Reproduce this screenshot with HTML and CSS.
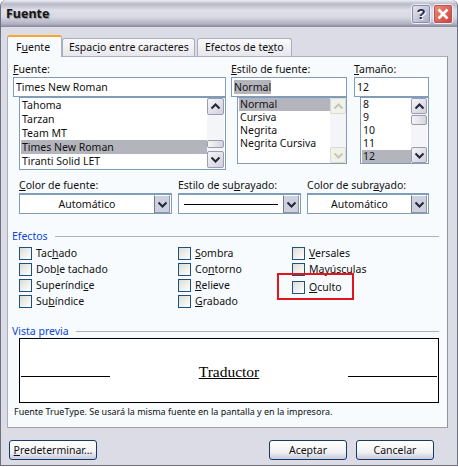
FILE: index.html
```html
<!DOCTYPE html>
<html lang="es">
<head>
<meta charset="utf-8">
<title>Fuente</title>
<link rel="stylesheet" href="styles.css">
</head>
<body>
<div class="window">
  <header class="titlebar">
    <span class="title">Fuente</span>
    <div class="caption-buttons">
      <button class="cap help">?</button>
      <button class="cap close"><svg width="14" height="14" viewBox="0 0 14 14"><path d="M2.5 2.5 L11.5 11.5 M11.5 2.5 L2.5 11.5" stroke="#fff" stroke-width="2.6" fill="none"/></svg></button>
    </div>
  </header>
  <div class="client">
    <div class="tabs">
      <div class="tab active">F<u>u</u>ente</div>
      <div class="tab second">Espac<u>i</u>o entre caracteres</div>
      <div class="tab third">Efectos de te<u>x</u>to</div>
    </div>
    <main class="panel">
      <div class="font-grid">
        <div class="picker">
          <label class="lbl"><u>F</u>uente:</label>
          <div class="input">Times New Roman</div>
          <div class="list tall pad">
            <div class="items">
              <div class="item">Tahoma</div>
              <div class="item">Tarzan</div>
              <div class="item">Team MT</div>
              <div class="item sel">Times New Roman</div>
              <div class="item">Tiranti Solid LET</div>
            </div>
            <div class="scroll">
              <span class="sbtn"><svg width="11" height="7" viewBox="0 0 11 7"><path d="M1.5 5.5 L5.5 1.5 L9.5 5.5" class="chev"/></svg></span>
              <span class="track track-font"><span class="thumb"></span></span>
              <span class="sbtn"><svg width="11" height="7" viewBox="0 0 11 7"><path d="M1.5 1.5 L5.5 5.5 L9.5 1.5" class="chev"/></svg></span>
            </div>
          </div>
        </div>
        <div class="picker">
          <label class="lbl"><u>E</u>stilo de fuente:</label>
          <div class="input"><span class="hl">Normal</span></div>
          <div class="list">
            <div class="items">
              <div class="item tight sel">Normal</div>
              <div class="item tight">Cursiva</div>
              <div class="item tight">Negrita</div>
              <div class="item tight">Negrita Cursiva</div>
            </div>
            <div class="scroll off small">
              <span class="sbtn"><svg width="11" height="7" viewBox="0 0 11 7"><path d="M1.5 5.5 L5.5 1.5 L9.5 5.5" class="chev"/></svg></span>
              <span class="track"></span>
              <span class="sbtn"><svg width="11" height="7" viewBox="0 0 11 7"><path d="M1.5 1.5 L5.5 5.5 L9.5 1.5" class="chev"/></svg></span>
            </div>
          </div>
        </div>
        <div class="picker">
          <label class="lbl"><u>T</u>amaño:</label>
          <div class="input">12</div>
          <div class="list pad">
            <div class="items">
              <div class="item tight">8</div>
              <div class="item tight">9</div>
              <div class="item tight">10</div>
              <div class="item tight">11</div>
              <div class="item tight sel">12</div>
            </div>
            <div class="scroll small">
              <span class="sbtn"><svg width="11" height="7" viewBox="0 0 11 7"><path d="M1.5 5.5 L5.5 1.5 L9.5 5.5" class="chev"/></svg></span>
              <span class="track track-size"><span class="thumb"></span></span>
              <span class="sbtn"><svg width="11" height="7" viewBox="0 0 11 7"><path d="M1.5 1.5 L5.5 5.5 L9.5 1.5" class="chev"/></svg></span>
            </div>
          </div>
        </div>
      </div>
      <div class="combo-grid">
        <div>
          <label class="lbl"><u>C</u>olor de fuente:</label>
          <div class="combo"><span class="combo-val">Automático</span><span class="drop"><svg width="11" height="7" viewBox="0 0 11 7"><path d="M1.5 1.5 L5.5 5.5 L9.5 1.5" class="chev"/></svg></span></div>
        </div>
        <div>
          <label class="lbl">Estilo de su<u>b</u>rayado:</label>
          <div class="combo"><span class="combo-val"><span class="line"></span></span><span class="drop"><svg width="11" height="7" viewBox="0 0 11 7"><path d="M1.5 1.5 L5.5 5.5 L9.5 1.5" class="chev"/></svg></span></div>
        </div>
        <div>
          <label class="lbl">Color de subr<u>a</u>yado:</label>
          <div class="combo"><span class="combo-val">Automático</span><span class="drop"><svg width="11" height="7" viewBox="0 0 11 7"><path d="M1.5 1.5 L5.5 5.5 L9.5 1.5" class="chev"/></svg></span></div>
        </div>
      </div>
      <section class="effects">
        <div class="group-head"><span>Efectos</span><i></i></div>
        <div class="check-grid">
          <div class="col">
            <div class="check"><b></b><span>Tac<u>h</u>ado</span></div>
            <div class="check"><b></b><span>Dob<u>l</u>e tachado</span></div>
            <div class="check"><b></b><span>Superíndi<u>c</u>e</span></div>
            <div class="check"><b></b><span>Su<u>b</u>índice</span></div>
          </div>
          <div class="col">
            <div class="check"><b></b><span><u>S</u>ombra</span></div>
            <div class="check"><b></b><span>Co<u>n</u>torno</span></div>
            <div class="check"><b></b><span><u>R</u>elieve</span></div>
            <div class="check"><b></b><span><u>G</u>rabado</span></div>
          </div>
          <div class="col">
            <div class="check"><b></b><span><u>V</u>ersales</span></div>
            <div class="check"><b></b><span>M<u>a</u>yúsculas</span></div>
            <div class="check hidden-opt"><b></b><span><u>O</u>culto</span></div>
            <div class="highlight"></div>
          </div>
        </div>
      </section>
      <section class="preview">
        <div class="group-head"><span>Vista previa</span><i></i></div>
        <div class="preview-box">
          <span class="rule"></span>
          <span class="sample">Traductor</span>
          <span class="rule"></span>
        </div>
        <p class="note">Fuente TrueType. Se usará la misma fuente en la pantalla y en la impresora.</p>
      </section>
    </main>
    <footer class="footer">
      <button class="btn wide"><u>P</u>redeterminar...</button>
      <div class="actions">
        <button class="btn">Aceptar</button>
        <button class="btn">Cancelar</button>
      </div>
    </footer>
  </div>
</div>
</body>
</html>
```
FILE: styles.css
```css
* { box-sizing: border-box; }
html, body { margin: 0; padding: 0; }
body { width: 458px; height: 467px; overflow: hidden; background: #fff; font-family: "Noto Sans", "Liberation Sans", sans-serif; font-size: 10.5px; line-height: 13px; color: #111; }
u { text-underline-offset: 1px; }

.window { width: 458px; height: 466px; display: flex; flex-direction: column; background: #dcdce6; border: 1px solid #6f7083; border-top: 0; border-radius: 6px 6px 0 0; }
.titlebar { height: 27px; flex: none; display: flex; justify-content: space-between; align-items: center; padding: 0 4px 0 5px; background: linear-gradient(#eeeff4 0, #b9bac9 4px, #dedfe8 10px, #d8d9e3 17px, #b0b0c0 24px, #85869a 27px); border-radius: 6px 6px 0 0; }
.title { font-weight: 700; font-size: 12.5px; color: #151515; text-shadow: 1px 1px 1px #8f8f9e; }
.caption-buttons { display: flex; gap: 2px; }
.cap { width: 20px; height: 20px; padding: 0; border: 1px solid #eef; border-radius: 3px; display: flex; align-items: center; justify-content: center; outline: 1px solid #8a8ca2; outline-offset: -2px; }
.help { background: linear-gradient(135deg, #e8e9f4, #a7aac6); color: #2a2a48; font: 700 15px/1 "Liberation Sans", sans-serif; text-shadow: 1px 1px 0 #fff; }
.close { background: linear-gradient(135deg, #ee8f7c, #cb3f38); outline-color: #b5564f; }

.client { flex: 1; display: flex; flex-direction: column; padding: 8px 9px 0 6px; min-height: 0; }
.tabs { display: flex; align-items: flex-end; height: 21px; position: relative; z-index: 1; margin-bottom: 0; }
.tab { height: 18px; padding: 2px 6px 0; background: linear-gradient(#fbfbfc, #e6e6ec); border: 1px solid #a9afbd; border-bottom: 0; border-radius: 3px 3px 0 0; white-space: nowrap; margin-bottom: 0; }
.tab.active { height: 22px; width: 55px; margin-bottom: -1px; padding: 4px 8px 0; background: #f7fbfd; border-top: 2px solid #f4a92a; }
.tab.second { width: 133px; padding-left: 6px; }
.tab.third { width: 95px; margin-left: 2px; padding-left: 7px; }
.panel { height: 372px; flex: none; background: #f7fbfd; border: 1px solid #a9afbd; border-right-color: #8f93a2; border-bottom-color: #a2a49c; padding: 6px 5px 0 5px; }

.font-grid { display: grid; grid-template-columns: 218px 123px 75px; height: 107px; }
.lbl { display: block; height: 14px; white-space: nowrap; }
.font-grid .picker:nth-child(2) { width: 116px; }
.input { height: 20px; background: #fff; border: 1px solid #7f9db9; padding: 3px 2px 0; white-space: nowrap; }
.font-grid .picker:first-child .input, .font-grid .picker:first-child .list { width: 213px; }
.hl { background: #b4b4bc; }
.list { height: 67px; margin-left: 6px; display: flex; background: #fff; border: 1px solid #7f9db9; }
.list.tall { height: 73px; width: 207px !important; }
.list.pad { padding-right: 1px; }
.items { flex: 1; min-width: 0; padding-left: 1px; }
.item { height: 14px; padding: 0 1px; line-height: 14px; white-space: nowrap; }
.item.tight { height: 13px; line-height: 13px; }
.item.sel { background: #b4b4bc; }
.scroll { width: 17px; flex: none; display: flex; flex-direction: column; padding-bottom: 1px; background: #f4f5f8; }
.scroll.small { width: 16px; padding-bottom: 0; }
.sbtn { height: 17px; flex: none; display: flex; align-items: center; justify-content: center; background: linear-gradient(135deg, #f5f5f8, #cfd0dc); border: 1px solid #9b9cb0; border-radius: 2px; }
.scroll.small .sbtn { height: 16px; }
.track { flex: 1; display: flex; flex-direction: column; }
.track-font { justify-content: flex-end; padding-bottom: 3px; }
.track-size { justify-content: flex-start; padding-top: 1px; }
.track-size .thumb { height: 10px; }
.thumb { display: block; height: 8px; background: linear-gradient(90deg, #f5f5f8, #d4d4de); border: 1px solid #9b9cb0; border-radius: 2px; }
.chev { fill: none; stroke: #22263a; stroke-width: 2; }
.scroll.off .sbtn { background: #f1f2ea; border-color: #d9dad0; }
.scroll.off .chev { stroke: #c4c6b8; }

.combo-grid { display: grid; grid-template-columns: 153px 123px 122px; column-gap: 6px; margin: 9px 0 0 6px; }
.combo { height: 21px; display: flex; background: #fff; border: 1px solid #7f9db9; border-top-width: 2px; align-items: stretch; padding-right: 1px; }
.combo-val { flex: 1; display: flex; align-items: center; justify-content: center; padding: 0 5px; }
.line { display: block; width: 100%; height: 1px; background: #000; }
.drop { width: 16px; flex: none; display: flex; align-items: center; justify-content: center; background: #cdd0de; border: 1px solid #8f93a2; border-top-color: #fff; border-left-color: #7a7a86; }

.effects { margin-top: 15px; }
.group-head { display: flex; align-items: center; gap: 7px; height: 14px; margin: 0 3px 0 -1px; color: #0a46d8; }
.group-head i { flex: 1; height: 1px; background: #b0b2ba; }
.check-grid { display: grid; grid-template-columns: 159px 114px 1fr; margin: 4px 0 0 6px; }
.col { position: relative; display: flex; flex-direction: column; gap: 3px; }
.check { height: 13px; display: flex; align-items: center; gap: 4px; white-space: nowrap; }
.check b { width: 13px; height: 13px; flex: none; border: 1px solid #1c5180; background: linear-gradient(135deg, #dcdcd6, #fff); }
.check.hidden-opt { margin-top: 2px; }
.highlight { position: absolute; left: -15px; top: 26px; width: 77px; height: 27px; border: 2px solid #e3141e; }

.preview { margin-top: 17px; }
.preview .group-head { height: 13px; }
.preview-box { height: 65px; margin: 0 3px 0 6px; background: #fff; border: 1px solid #000; display: flex; align-items: flex-end; justify-content: space-between; padding: 0 1px 25px; }
.rule { width: 89px; height: 1px; background: #000; }
.sample { font: 15.5px/17px "Liberation Serif", serif; text-decoration: underline; color: #000; margin-bottom: -3px; }
.note { margin: 2px 0 0 1px; font-size: 9px; white-space: nowrap; }

.footer { flex: 1; display: flex; justify-content: space-between; align-items: flex-start; padding: 12px 14px 0 2px; }
.actions { display: flex; gap: 9px; }
.btn { width: 78px; height: 20px; padding: 0; border: 1px solid #153a63; border-radius: 3px; background: linear-gradient(#fff 0, #f2f2f4 60%, #c9cadb 100%); font: inherit; color: #111; }
.btn.wide { width: 88px; }
```
